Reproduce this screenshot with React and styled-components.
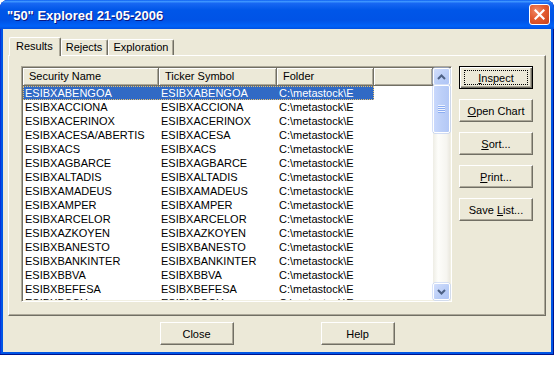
import styled, { createGlobalStyle } from "styled-components";

const GlobalStyle = createGlobalStyle`
  html, body {
    margin: 0;
    padding: 0;
    background: #ffffff;
  }
  body {
    font-family: "Liberation Sans", Arial, sans-serif;
    font-size: 11px;
    color: #000;
  }
`;

const rows = [
  ["ESIBXABENGOA", "ESIBXABENGOA"],
  ["ESIBXACCIONA", "ESIBXACCIONA"],
  ["ESIBXACERINOX", "ESIBXACERINOX"],
  ["ESIBXACESA/ABERTIS", "ESIBXACESA"],
  ["ESIBXACS", "ESIBXACS"],
  ["ESIBXAGBARCE", "ESIBXAGBARCE"],
  ["ESIBXALTADIS", "ESIBXALTADIS"],
  ["ESIBXAMADEUS", "ESIBXAMADEUS"],
  ["ESIBXAMPER", "ESIBXAMPER"],
  ["ESIBXARCELOR", "ESIBXARCELOR"],
  ["ESIBXAZKOYEN", "ESIBXAZKOYEN"],
  ["ESIBXBANESTO", "ESIBXBANESTO"],
  ["ESIBXBANKINTER", "ESIBXBANKINTER"],
  ["ESIBXBBVA", "ESIBXBBVA"],
  ["ESIBXBEFESA", "ESIBXBEFESA"],
  ["ESIBXBSCH", "ESIBXBSCH"],
];

const columns = [
  { title: "Security Name", width: 136 },
  { title: "Ticker Symbol", width: 118 },
  { title: "Folder", width: 97 },
];

const Chevron = ({ down }) => (
  <svg width="9" height="6" viewBox="0 0 9 6">
    <path
      d={down ? "M1 1 L4.5 4.5 L8 1" : "M1 5 L4.5 1.5 L8 5"}
      stroke="#4D6185"
      strokeWidth="2"
      fill="none"
    />
  </svg>
);

const CloseGlyph = () => (
  <svg width="11" height="11" viewBox="0 0 11 11">
    <path d="M1.5 1.5 L9.5 9.5 M9.5 1.5 L1.5 9.5" stroke="#fff" strokeWidth="2.2" strokeLinecap="square" />
  </svg>
);

export default function App() {
  return (
    <>
      <GlobalStyle />
      <Window>
        <TitleBar>
          <Title>"50" Explored 21-05-2006</Title>
          <CloseBox>
            <CloseGlyph />
          </CloseBox>
        </TitleBar>
        <Client>
          <TabStrip>
            <Tab $active>Results</Tab>
            <Tab>Rejects</Tab>
            <Tab>Exploration</Tab>
          </TabStrip>
          <Panel>
            <ListBox>
              <ListContent>
                <HeaderRow>
                  {columns.map((c) => (
                    <HeaderCell key={c.title} style={{ width: c.width }}>
                      {c.title}
                    </HeaderCell>
                  ))}
                  <HeaderFiller />
                </HeaderRow>
                {rows.map(([name, ticker], i) => (
                  <Row key={name} $selected={i === 0}>
                    <Cell style={{ width: columns[0].width }}>{name}</Cell>
                    <Cell style={{ width: columns[1].width }}>{ticker}</Cell>
                    <Cell style={{ width: columns[2].width }}>C:\metastock\E</Cell>
                  </Row>
                ))}
              </ListContent>
              <ScrollBar>
                <ScrollButton>
                  <Chevron />
                </ScrollButton>
                <Track>
                  <Thumb>
                    <Grip />
                  </Thumb>
                </Track>
                <ScrollButton>
                  <Chevron down />
                </ScrollButton>
              </ScrollBar>
            </ListBox>
            <ButtonColumn>
              <Button $default>
                <Focus>
                  <Label><u>I</u>nspect</Label>
                </Focus>
              </Button>
              <Button>
                <Label><u>O</u>pen Chart</Label>
              </Button>
              <Button>
                <Label><u>S</u>ort...</Label>
              </Button>
              <Button>
                <Label><u>P</u>rint...</Label>
              </Button>
              <Button>
                <Label>Save <u>L</u>ist...</Label>
              </Button>
            </ButtonColumn>
          </Panel>
          <Footer>
            <Button>
              <Label>Close</Label>
            </Button>
            <Button>
              <Label>Help</Label>
            </Button>
          </Footer>
        </Client>
      </Window>
    </>
  );
}

const Window = styled.div`
  width: 554px;
  height: 355px;
  box-sizing: border-box;
  display: flex;
  flex-direction: column;
  background: #0055e5;
  border-radius: 8px 8px 0 0;
  box-shadow: inset 0 -1px #00138c, inset -1px 0 #00138c, inset 1px 0 #0831d9;
  overflow: hidden;
`;

const TitleBar = styled.div`
  height: 29px;
  flex: none;
  display: flex;
  align-items: center;
  justify-content: space-between;
  padding: 0 4px 0 7px;
  background: linear-gradient(
    #0a5cf0 0%,
    #3d95ff 5%,
    #1767f2 12%,
    #0056e8 35%,
    #0053e6 70%,
    #0062f8 90%,
    #0050e0 100%
  );
`;

const Title = styled.span`
  font-family: "Liberation Sans", Arial, sans-serif;
  font-weight: bold;
  font-size: 13px;
  color: #ffffff;
  text-shadow: 1px 1px #0a1883;
  padding-top: 1px;
`;

const CloseBox = styled.div`
  width: 21px;
  height: 21px;
  box-sizing: border-box;
  border: 1px solid #ffffff;
  border-radius: 3px;
  display: flex;
  align-items: center;
  justify-content: center;
  background: radial-gradient(circle at 35% 30%, #f08a66 0%, #e35b30 45%, #c7421b 100%);
`;

const Client = styled.div`
  flex: 1;
  margin: 0 3px 3px;
  background: #ece9d8;
  padding: 8px 5px 0 5px;
  display: flex;
  flex-direction: column;
`;

const TabStrip = styled.div`
  height: 18px;
  display: flex;
  align-items: flex-end;
  padding-left: 1px;
  position: relative;
  z-index: 1;
`;

const Tab = styled.div`
  box-sizing: border-box;
  height: ${(p) => (p.$active ? "19px" : "16px")};
  margin-bottom: ${(p) => (p.$active ? "-1px" : "0")};
  padding: ${(p) => (p.$active ? "2px 7px 0 6px" : "1px 5px 0 4px")};
  background: #ece9d8;
  border-top: 1px solid #ffffff;
  border-left: 1px solid #ffffff;
  border-right: 1px solid #716f64;
  border-radius: 2px 2px 0 0;
  box-shadow: inset -1px 0 #aca899;
  line-height: 13px;
  white-space: nowrap;
`;

const Panel = styled.div`
  height: 261px;
  box-sizing: border-box;
  display: flex;
  gap: 7px;
  padding: 10px 12px 13px 12px;
  border-top: 1px solid #ffffff;
  border-left: 1px solid #ffffff;
  border-right: 1px solid #716f64;
  border-bottom: 1px solid #716f64;
  box-shadow: inset -1px -1px #aca899;
`;

const ListBox = styled.div`
  flex: 1;
  display: flex;
  padding: 1px;
  background: #ffffff;
  border-top: 1px solid #aca899;
  border-left: 1px solid #aca899;
  border-right: 1px solid #ffffff;
  border-bottom: 1px solid #ffffff;
  box-shadow: inset 1px 1px #716f64, inset -1px -1px #f1efe2;
  overflow: hidden;
`;

const ListContent = styled.div`
  flex: 1;
  overflow: hidden;
`;

const HeaderRow = styled.div`
  display: flex;
  height: 18px;
`;

const HeaderCell = styled.div`
  box-sizing: border-box;
  flex: none;
  height: 18px;
  padding-left: 6px;
  line-height: 16px;
  background: #ece9d8;
  border-right: 1px solid #716f64;
  border-bottom: 1px solid #716f64;
  box-shadow: inset 1px 1px #ffffff, inset -1px -1px #aca899;
  white-space: nowrap;
  overflow: hidden;
`;

const HeaderFiller = styled(HeaderCell)`
  flex: 1;
`;

const Row = styled.div`
  display: flex;
  width: max-content;
  height: 14px;
  line-height: 14px;
  background: ${(p) => (p.$selected ? "#316ac5" : "transparent")};
  color: ${(p) => (p.$selected ? "#ffffff" : "#000000")};
  outline: ${(p) => (p.$selected ? "1px dotted #e8c270" : "none")};
  outline-offset: -1px;
`;

const Cell = styled.div`
  flex: none;
  box-sizing: border-box;
  padding-left: 2px;
  white-space: nowrap;
  overflow: hidden;
`;

const ScrollBar = styled.div`
  width: 17px;
  flex: none;
  display: flex;
  flex-direction: column;
  background: linear-gradient(to right, #eeede5, #fdfdfa 30%, #f6f5f0 80%, #ebe9e0);
`;

const ScrollButton = styled.div`
  width: 17px;
  height: 17px;
  box-sizing: border-box;
  flex: none;
  display: flex;
  align-items: center;
  justify-content: center;
  border: 1px solid #ffffff;
  border-radius: 2px;
  background: linear-gradient(135deg, #d2defc, #b9cdf7 60%, #aec4f6);
  box-shadow: 0 0 0 0.5px #b3c7f5;
`;

const Track = styled.div`
  flex: 1;
`;

const Thumb = styled.div`
  height: 48px;
  box-sizing: border-box;
  border: 1px solid #ffffff;
  border-radius: 2px;
  background: linear-gradient(to right, #c9d8fc, #bccff8 50%, #b3c8f6);
  box-shadow: 0 0 0 0.5px #a9bff2;
  display: flex;
  align-items: center;
  justify-content: center;
`;

const Grip = styled.div`
  width: 7px;
  height: 8px;
  background: repeating-linear-gradient(#eef3fe 0 1px, #8cadf2 1px 2px);
`;

const ButtonColumn = styled.div`
  width: 74px;
  flex: none;
  display: flex;
  flex-direction: column;
  gap: 10px;
`;

const Button = styled.button`
  width: 74px;
  height: 23px;
  box-sizing: border-box;
  padding: 0;
  display: flex;
  align-items: center;
  justify-content: center;
  font-family: "Liberation Sans", Arial, sans-serif;
  font-size: 11px;
  color: #000;
  background: #ece9d8;
  border-top: 1px solid ${(p) => (p.$default ? "#000" : "#ffffff")};
  border-left: 1px solid ${(p) => (p.$default ? "#000" : "#ffffff")};
  border-right: 1px solid ${(p) => (p.$default ? "#000" : "#716f64")};
  border-bottom: 1px solid ${(p) => (p.$default ? "#000" : "#716f64")};
  box-shadow: ${(p) =>
    p.$default
      ? "inset 1px 1px #ffffff, inset -1px -1px #716f64, inset -2px -2px #aca899"
      : "inset -1px -1px #aca899"};
`;

const Label = styled.span`
  white-space: pre;
  u {
    text-decoration: underline;
    text-underline-offset: 1px;
  }
`;

const Focus = styled.span`
  display: flex;
  align-items: center;
  justify-content: center;
  width: 64px;
  height: 15px;
  border: 1px dotted #000;
  box-sizing: border-box;
`;

const Footer = styled.div`
  flex: 1;
  display: flex;
  justify-content: center;
  gap: 87px;
  padding-top: 6px;
`;
